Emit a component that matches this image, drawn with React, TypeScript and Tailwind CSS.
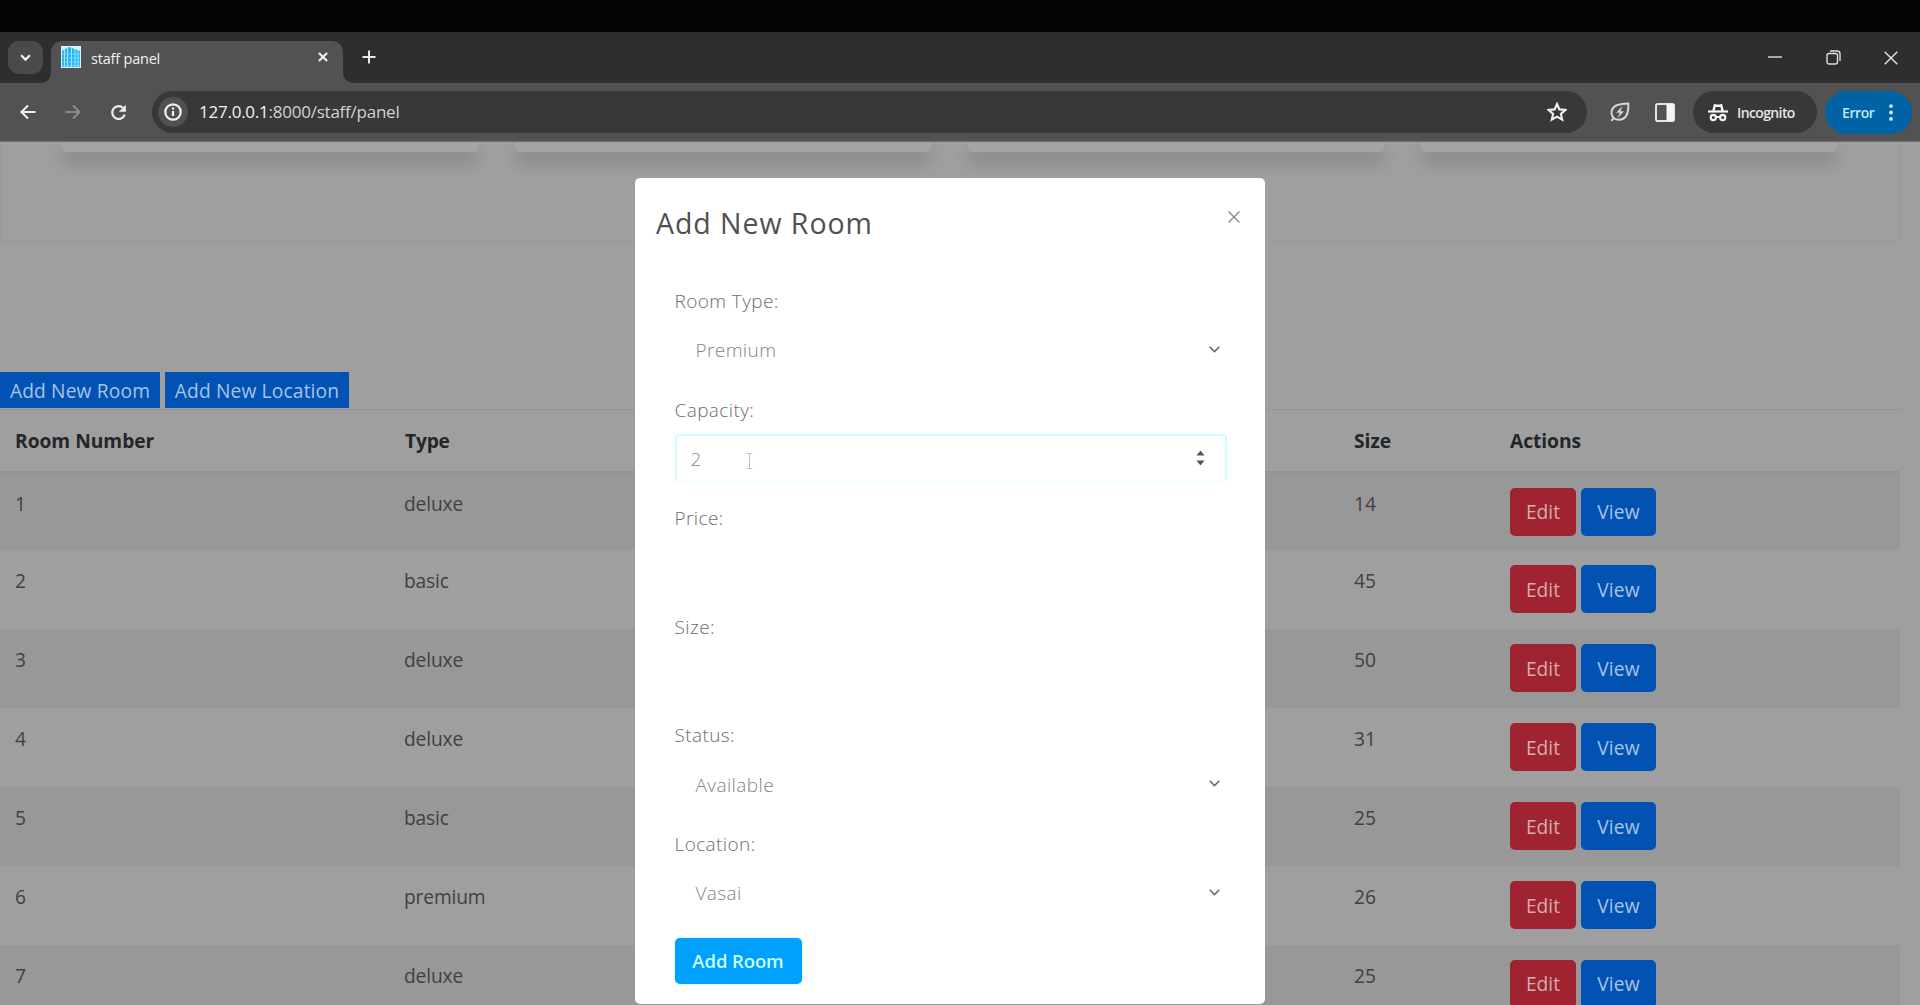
import React from "react";

const rooms = [
  { n: 1, type: "deluxe", size: 14 },
  { n: 2, type: "basic", size: 45 },
  { n: 3, type: "deluxe", size: 50 },
  { n: 4, type: "deluxe", size: 31 },
  { n: 5, type: "basic", size: 25 },
  { n: 6, type: "premium", size: 26 },
  { n: 7, type: "deluxe", size: 25 },
];

function Favicon() {
  return (
    <svg className="h-[22px] w-5" viewBox="0 0 20 22">
      <rect width="20" height="22" fill="#d5f2fd" />
      <path d="M1 5 8 1l11 4v16H1z" fill="#22b4ee" />
      <path d="M3.5 4v17M6.5 2v19M10.5 2v19M14 3v18M17 4v17" stroke="#a8e8ff" strokeWidth="1" />
      <path d="M1 8h18M1 12h18M1 16h18M1 19.5h18" stroke="#83dbfa" strokeWidth=".8" />
    </svg>
  );
}

function TabStrip() {
  return (
    <div className="flex h-[51px] bg-[#2e2e2e] pt-[9px]">
      <div className="ml-2 flex h-[33px] w-[35px] items-center justify-center rounded-[11px] bg-[#4a4a4a]">
        <svg className="h-[11px] w-[11px]" viewBox="0 0 12 12" fill="none" stroke="#f2f2f2" strokeWidth="2.4">
          <path d="m1.2 3.5 4.8 4.8 4.8-4.8" />
        </svg>
      </div>
      <div className="flex w-[8px] items-end justify-end">
        <svg className="-ml-2 h-3 w-3 shrink-0" viewBox="0 0 12 12">
          <path d="M12 0v12H0C8 12 12 8 12 0z" fill="#525252" />
        </svg>
      </div>
      <div className="flex h-[42px] w-[292px] items-start rounded-t-[11px] bg-[#525252] pl-[10px] pt-[5px]">
        <Favicon />
        <span className="ml-[10px] mt-[3px] text-[14.5px] font-medium leading-[20px] tracking-[-0.2px] text-[#f0f0f0]">staff panel</span>
        <svg className="ml-auto mr-[15px] mt-[6px] h-[10px] w-[10px]" viewBox="0 0 11 11" stroke="#f2f2f2" strokeWidth="2.4">
          <path d="m1 1 9 9M10 1l-9 9" />
        </svg>
      </div>
      <div className="flex items-end">
        <svg className="h-3 w-3" viewBox="0 0 12 12">
          <path d="M0 0v12h12C4 12 0 8 0 0z" fill="#525252" />
        </svg>
      </div>
      <svg className="ml-[7px] mt-[9px] h-[14px] w-[14px]" viewBox="0 0 14 14" stroke="#e8e8e8" strokeWidth="2">
        <path d="M7 .5v13M.5 7h13" />
      </svg>
      <div className="ml-auto flex h-[33px] items-center">
        <svg className="h-[14px] w-[14px]" viewBox="0 0 14 14" stroke="#e0e0e0" strokeWidth="1.4">
          <path d="M0 6h14" />
        </svg>
        <svg className="ml-[44px] h-[15px] w-[15px]" viewBox="0 0 15 15" fill="none" stroke="#dedede" strokeWidth="1.4">
          <rect x="1" y="3.5" width="10.5" height="10.5" rx="2" />
          <path d="M4 1h7a3 3 0 0 1 3 3v7" />
        </svg>
        <svg className="ml-[43px] mr-[22px] h-[14px] w-[14px]" viewBox="0 0 14 14" stroke="#e6e6e6" strokeWidth="1.4">
          <path d="m.7.7 12.6 12.6M13.3.7.7 13.3" />
        </svg>
      </div>
    </div>
  );
}

function Toolbar() {
  return (
    <div className="flex h-[59px] items-center border-b border-[#6f6f6f] bg-[#525252]">
      <svg className="ml-5 h-4 w-4 shrink-0" viewBox="0 0 16 16" fill="none" stroke="#f2f2f2" strokeWidth="2">
        <path d="M15.5 8H1.8M8 1.5 1.5 8 8 14.5" />
      </svg>
      <svg className="ml-[29px] h-4 w-4 shrink-0" viewBox="0 0 16 16" fill="none" stroke="#8b8b8b" strokeWidth="2">
        <path d="M.5 8h13.7M8 1.5 14.5 8 8 14.5" />
      </svg>
      <svg className="ml-[29px] h-[17px] w-[17px] shrink-0" viewBox="0 0 18 18">
        <path d="M15.6 11.200A6.800 6.800 0 1 1 14 4.200" fill="none" stroke="#ececec" strokeWidth="2.300" />
        <path d="M16.800.8v7.400H9.400z" fill="#ececec" />
      </svg>
      <div className="ml-[25px] flex h-[42px] w-[1435px] shrink-0 items-center rounded-full bg-[#383838] pl-[6px]">
        <div className="flex h-[30px] w-[30px] items-center justify-center rounded-full bg-[#505050]">
          <svg className="h-[18px] w-[18px]" viewBox="0 0 18 18" fill="none" stroke="#f2f2f2" strokeWidth="2.200">
            <circle cx="9" cy="9" r="7.700" />
            <path d="M9 8v5M9 4.600v2" />
          </svg>
        </div>
        <span className="ml-[11px] text-[17px] tracking-[-0.24px] text-[#d2d2d2]">
          <span className="text-[#f2f2f2]">127.0.0.1</span>:8000/staff/panel
        </span>
        <svg className="ml-auto mr-5 h-5 w-5" viewBox="0 0 20 20" fill="none" stroke="#f0f0f0" strokeWidth="2.100">
          <path d="m10 2 2.400 5.400 5.900.6-4.400 3.900 1.300 5.800L10 14.700l-5.200 3 1.300-5.800L1.700 8l5.900-.6z" />
        </svg>
      </div>
      <svg className="ml-[23px] h-5 w-5 shrink-0" viewBox="0 0 20 20" fill="none" stroke="#d8d8d8" strokeWidth="2">
        <path d="M18.300 1.500c-8 0-16.800 1-16.800 9.300 0 4.300 3.300 7 7.300 7 8 0 10-8 9.500-16.300zM4.500 15.500l-3.200 3.200" />
        <path d="m12.500 4-6.300 6.700h3.500L7.700 16l6.300-6.700h-3.500z" fill="#d8d8d8" stroke="none" />
      </svg>
      <svg className="ml-[25px] h-[19px] w-[20px] shrink-0" viewBox="0 0 20 19">
        <rect x="1" y="1" width="18" height="17" rx="1.800" fill="none" stroke="#e4e4e4" strokeWidth="2" />
        <path d="M11.500 1H19v17h-7.500z" fill="#f5f5f5" />
      </svg>
      <div className="ml-[18px] flex h-[42px] w-[124px] shrink-0 items-center rounded-full bg-[#383838] pl-[15px]">
        <svg className="h-[19px] w-[20px]" viewBox="0 0 20 19" fill="none" stroke="#f4f4f4" strokeWidth="2">
          <path d="M0 8.500h20" strokeWidth="2.200" />
          <path d="M4 8.500 6 .8l2.500.7h3L14 .8l2 7.700h-2.700L12.500 4h-5l-.8 4.500z" fill="#f4f4f4" stroke="none" />
          <circle cx="5.300" cy="14.500" r="2.600" strokeWidth="2.200" />
          <circle cx="14.700" cy="14.500" r="2.600" strokeWidth="2.200" />
          <path d="M8 14h4" />
        </svg>
        <span className="ml-[9px] text-[14px] font-semibold tracking-[-0.62px] text-[#e6e6e6]">Incognito</span>
      </div>
      <div className="ml-2 flex h-[43px] w-[87px] shrink-0 items-center rounded-full bg-[#0263a4] pl-[17px]">
        <span className="text-[14px] font-semibold tracking-[-0.4px] text-[#bfe9ff]">Error</span>
        <svg className="ml-auto mr-[19px] h-[17px] w-1" viewBox="0 0 4 18" fill="#c4ecff">
          <circle cx="2" cy="2.200" r="2" />
          <circle cx="2" cy="9" r="2" />
          <circle cx="2" cy="15.800" r="2" />
        </svg>
      </div>
    </div>
  );
}

function Dashboard() {
  return (
    <div className="h-[863px] overflow-hidden bg-[#9f9f9f] text-[19.2px]">
      <div className="flex h-[100px] w-[1900px] gap-[37px] border-x border-b border-[#999999] pl-[61px]">
        {[0, 1, 2, 3].map((i) => (
          <div key={i} className="h-[10px] w-[416px] rounded-b-[5px] bg-[#a4a4a4] shadow-[0_10px_16px_rgba(0,0,0,0.2)]" />
        ))}
      </div>
      <div className="mt-[130px] flex h-9 gap-[5px] text-[#a9c3e6]">
        <button className="w-[160px] bg-[#0152b2] pl-0 pt-[2px] text-center tracking-[0.15px]">Add New Room</button>
        <button className="w-[184px] bg-[#0152b2] pt-[2px] text-center tracking-[0.15px]">Add New Location</button>
      </div>
      <table className="mt-px w-[1900px] table-fixed border-collapse text-left">
        <colgroup>
          <col className="w-[390px]" />
          <col className="w-[949px]" />
          <col className="w-[156px]" />
          <col />
        </colgroup>
        <thead>
          <tr className="h-[62px] border-b-2 border-t border-b-[#939393] border-t-[#949494] text-[#242628]">
            <th className="pl-[15px] pt-[3px] font-bold tracking-[-0.02px]">Room Number</th>
            <th className="pl-[15px] pt-[3px] font-bold tracking-[-0.2px]">Type</th>
            <th className="pl-[15px] pt-[3px] font-bold">Size</th>
            <th className="pl-[15px] pt-[3px] font-bold tracking-[-0.05px]">Actions</th>
          </tr>
        </thead>
        <tbody>
          {rooms.map((r) => (
            <tr key={r.n} className="h-[78.9px] align-top text-[#3f4143] odd:bg-[#989898]">
              <td className="pl-[15px] pt-[17px]">{r.n}</td>
              <td className="pl-[14px] pt-[17px] tracking-[-0.15px]">{r.type}</td>
              <td className="pl-[15px] pt-[17px]">{r.size}</td>
              <td className="pl-[15px] pt-[15px]">
                <div className="flex gap-[5px]">
                  <button className="h-12 w-[66px] rounded-[5px] bg-[#9f2330] pt-[2px] text-[#d5abaf]">Edit</button>
                  <button className="h-12 w-[75px] rounded-[5px] bg-[#0152b2] pt-[2px] tracking-[0.2px] text-[#a9c3e6]">View</button>
                </div>
              </td>
            </tr>
          ))}
        </tbody>
      </table>
    </div>
  );
}

function Field({ label, children }: { label: string; children?: React.ReactNode }) {
  return (
    <div className="h-[108.6px]">
      <label className="block h-[30px] leading-[30px] text-[#6d6d6d]">{label}</label>
      <div className="mt-[9px] h-12">{children}</div>
    </div>
  );
}

function Select({ value }: { value: string }) {
  return (
    <div className="flex h-full items-center justify-between pl-[21px] pr-[7px] pt-[3px] text-[#858585]">
      <span>{value}</span>
      <svg className="mb-[2px] h-[7px] w-[11px]" viewBox="0 0 11 7" fill="none" stroke="#666666" strokeWidth="1.500">
        <path d="m.7.8 4.800 4.800L10.300.8" />
      </svg>
    </div>
  );
}

function AddRoomModal() {
  return (
    <div className="absolute left-[634.5px] top-[178px] flex h-[826px] w-[630px] flex-col rounded-[5px] bg-white">
      <div className="flex justify-between pl-[21.500px] pr-[25px] pt-[25px]">
        <h2 className="text-[28.500px] leading-[40px] tracking-[0.95px] text-[#505050]">Add New Room</h2>
        <svg className="mt-2 h-[12px] w-[12px]" viewBox="0 0 12 12" stroke="#888888" strokeWidth="1.400">
          <path d="m.5.5 11 11M11.500.5l-11 11" />
        </svg>
      </div>
      <form className="mt-[43px] pl-10 pr-[38px] text-[19px] font-light tracking-[0.4px]">
        <Field label="Room Type:">
          <Select value="Premium" />
        </Field>
        <Field label="Capacity:">
          <div className="flex h-full items-center rounded-[4px] border-2 border-x-[#c8ffff] border-b-[#f0ffff] border-t-[#ccffff] pl-[14px] pr-[20px] text-[#8a8a8a]">
            <span className="pt-[3px]">2</span>
            <svg className="ml-[44px] mt-[6px] h-4 w-[7px]" viewBox="0 0 7 16" stroke="#c4c4c4" fill="none">
              <path d="M.5.5h6M3.500.5v15M.5 15.500h6" />
            </svg>
            <svg className="ml-auto h-4 w-[9px]" viewBox="0 0 9 16" fill="#555555">
              <path d="M4.500.5 8.500 5.500H.5zM4.500 15.500l4-5H.5z" />
            </svg>
          </div>
        </Field>
        <Field label="Price:" />
        <Field label="Size:" />
        <Field label="Status:">
          <Select value="Available" />
        </Field>
        <Field label="Location:">
          <Select value="Vasai" />
        </Field>
        <button type="button" className="h-[46px] w-[127px] rounded-[5px] bg-[#00a0ff] text-[18.500px] font-semibold tracking-[-0.1px] text-[#c8ffff] shadow-[0_0_2px_#8ff4ff]">
          Add Room
        </button>
      </form>
    </div>
  );
}

export default function App() {
  return (
    <div className="relative h-[1005px] w-[1920px] overflow-hidden bg-[#050505] pt-8 font-['Open_Sans','Noto_Sans',sans-serif]">
      <TabStrip />
      <Toolbar />
      <Dashboard />
      <AddRoomModal />
    </div>
  );
}
